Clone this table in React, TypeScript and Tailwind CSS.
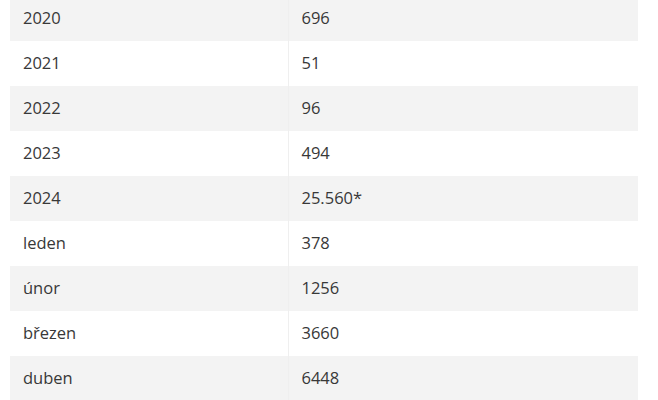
import React from 'react';

interface Row {
  label: string;
  value: string;
}

const rows: Row[] = [
  { label: '2020', value: '696' },
  { label: '2021', value: '51' },
  { label: '2022', value: '96' },
  { label: '2023', value: '494' },
  { label: '2024', value: '25.560*' },
  { label: 'leden', value: '378' },
  { label: 'únor', value: '1256' },
  { label: 'březen', value: '3660' },
  { label: 'duben', value: '6448' },
];

const App: React.FC = () => {
  return (
    <div className="h-[400px] w-[658px] overflow-hidden bg-white font-['Open_Sans',sans-serif] text-[16.5px] text-[#383838]">
      <table className="ml-[10px] mt-[-4px] w-[628px] border-collapse">
        <tbody>
          {rows.map((row, index) => (
            <tr key={row.label} className={index % 2 === 0 ? 'bg-[#f3f3f3]' : 'bg-white'}>
              <td className="h-[45px] w-[278px] border-r border-[#efefef] pl-[13px] align-middle">{row.label}</td>
              <td className="h-[45px] pl-[13px] align-middle">{row.value}</td>
            </tr>
          ))}
        </tbody>
      </table>
    </div>
  );
};

export default App;
